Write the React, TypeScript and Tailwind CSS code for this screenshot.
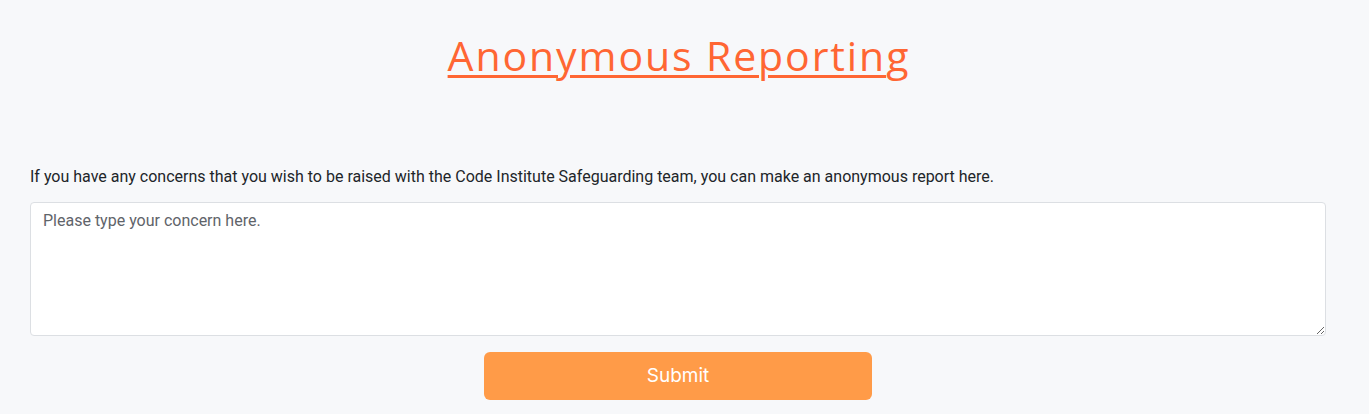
export default function App() {
  return (
    <div className="min-h-[414px] w-full bg-[#f7f8fa] pl-[30px] pr-[43px] pt-[27px]" style={{ fontFamily: "Roboto, 'Noto Sans', sans-serif" }}>
      <h1 className="text-center">
        <a
          href="#"
          className="text-[41px] leading-[56px] font-medium text-[#ff6633] underline decoration-[3px] underline-offset-[4px] tracking-[1.9px]"
          style={{ fontFamily: "'Open Sans', 'Noto Sans', sans-serif" }}
        >
          Anonymous Reportin<span className="tracking-normal">g</span>
        </a>
      </h1>
      <p className="mt-[82px] text-[16px] leading-[24px] text-[#212529]">
        If you have any concerns that you wish to be raised with the Code Institute Safeguarding team, you can make an anonymous report here.
      </p>
      <textarea
        className="mt-[13px] block h-[134px] w-full rounded-[4px] border border-[#dcdfe3] bg-white px-[12px] py-[6px] text-[16px] leading-[24px] text-[#212529] placeholder:text-[#5f646a] outline-none"
        placeholder="Please type your concern here."
      />
      <div className="mt-[16px] flex justify-center">
        <button
          className="h-[48px] w-[30%] rounded-[6px] bg-[#ff9b48] text-[19px] text-white"
          style={{ fontFamily: "Inter, 'Liberation Sans', sans-serif" }}
        >
          Submit
        </button>
      </div>
    </div>
  );
}
